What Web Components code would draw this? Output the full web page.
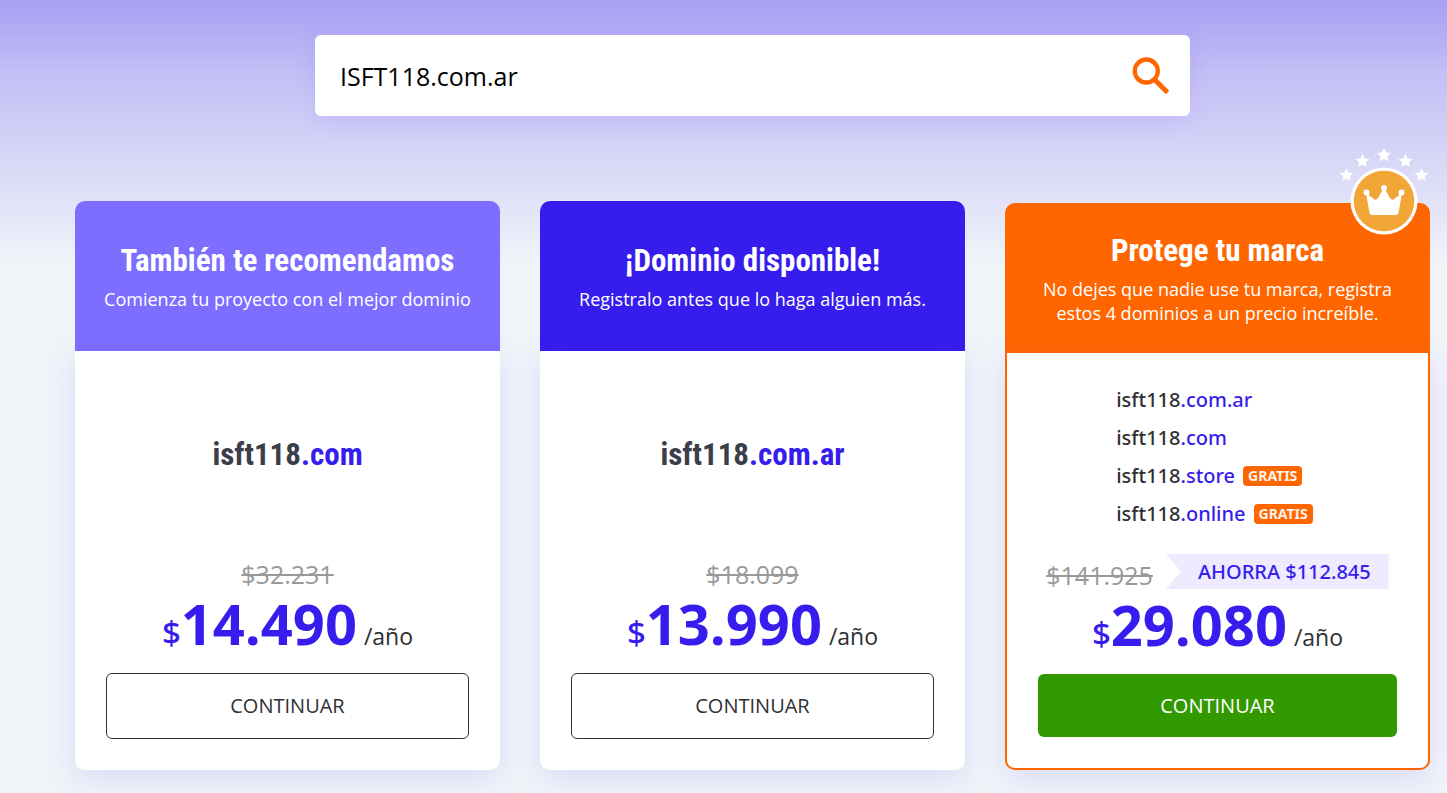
<!DOCTYPE html>
<html lang="es">
<head>
<meta charset="utf-8">
<meta name="viewport" content="width=device-width, initial-scale=1">
<title>Buscador de dominios</title>
<style>
body {
  margin: 0;
  min-height: 100vh;
  background: linear-gradient(#a79ff3 0, #c3bef5 72px, #f0f4f9 264px) no-repeat, #f0f4f9;
  font-family: "Open Sans", "Noto Sans", sans-serif;
  color: #2f3033;
}
.domains { margin-right: 6px; }
</style>
</head>
<body>
<domain-page>
  <domain-search slot="search" value="ISFT118.com.ar"></domain-search>
  <plan-card tone="violet">
    <span slot="title">También te recomendamos</span>
    <span slot="subtitle">Comienza tu proyecto con el mejor dominio</span>
    <domain-name slot="offer" size="large" name="isft118" tld=".com"></domain-name>
    <price-tag slot="price" old="$32.231" amount="14.490"></price-tag>
  </plan-card>
  <plan-card tone="blue">
    <span slot="title">¡Dominio disponible!</span>
    <span slot="subtitle">Registralo antes que lo haga alguien más.</span>
    <domain-name slot="offer" size="large" name="isft118" tld=".com.ar"></domain-name>
    <price-tag slot="price" old="$18.099" amount="13.990"></price-tag>
  </plan-card>
  <plan-card tone="orange" featured>
    <crown-badge slot="badge"></crown-badge>
    <span slot="title">Protege tu marca</span>
    <span slot="subtitle">No dejes que nadie use tu marca, registra estos 4 dominios a un precio increíble.</span>
    <div slot="offer" class="domains">
      <domain-name name="isft118" tld=".com.ar"></domain-name>
      <domain-name name="isft118" tld=".com"></domain-name>
      <domain-name name="isft118" tld=".store" tag="GRATIS"></domain-name>
      <domain-name name="isft118" tld=".online" tag="GRATIS"></domain-name>
    </div>
    <price-tag slot="price" old="$141.925" amount="29.080" saving="AHORRA $112.845"></price-tag>
  </plan-card>
</domain-page>

<script>
class DomainPage extends HTMLElement {
  connectedCallback() {
    this.attachShadow({ mode: 'open' }).innerHTML = `
      <style>
        :host { display: block; padding: 35px 17px 22px 75px; }
        .search { max-width: 875px; margin: 0 auto 85px; }
        .cards { display: grid; grid-template-columns: repeat(3, minmax(0, 1fr)); gap: 40px; }
        @media (max-width: 1100px) {
          :host { padding: 24px; }
          .cards { grid-template-columns: minmax(0, 1fr); }
        }
      </style>
      <main>
        <div class="search"><slot name="search"></slot></div>
        <div class="cards"><slot></slot></div>
      </main>`;
  }
}

class DomainSearch extends HTMLElement {
  connectedCallback() {
    this.attachShadow({ mode: 'open' }).innerHTML = `
      <style>
        :host { display: block; }
        form {
          display: flex; align-items: center; box-sizing: border-box; height: 81px;
          padding: 0 20px 0 25px; background: #fff; border-radius: 6px;
          box-shadow: 0 4px 24px rgba(54, 29, 237, .08);
        }
        input {
          flex: 1; min-width: 0; height: 60px; padding: 0; border: 0; outline: 0;
          background: none; color: #000; font: 400 25px/36px "Open Sans", "Noto Sans", sans-serif;
        }
        button { display: flex; padding: 0; border: 0; background: none; cursor: pointer; }
      </style>
      <form role="search" onsubmit="return false">
        <input type="text" aria-label="Buscar dominio">
        <button type="submit" aria-label="Buscar">
          <svg width="40" height="40" viewBox="0 0 40 40" fill="none" stroke="#ff6600">
            <circle cx="16.300" cy="15" r="11.500" stroke-width="4.300"/>
            <path d="M24.500 23.500 37.500 36.500" stroke-width="4.800"/>
          </svg>
        </button>
      </form>`;
    this.shadowRoot.querySelector('input').value = this.getAttribute('value') || '';
  }
}

class PlanCard extends HTMLElement {
  connectedCallback() {
    this.attachShadow({ mode: 'open' }).innerHTML = `
      <style>
        :host { display: flex; flex-direction: column; position: relative; --tone: #7d6eff; }
        :host([tone="blue"]) { --tone: #361ded; }
        :host([tone="orange"]) { --tone: #ff6600; }
        :host([featured]) { margin-top: 2px; }
        header {
          display: flex; flex-direction: column; align-items: center; justify-content: center;
          box-sizing: border-box; min-height: 150px; padding: 0 24px; gap: 6px;
          background: var(--tone); color: #fff; text-align: center; border-radius: 10px 10px 0 0;
        }
        h2 { margin: 0; font: 700 31px/40px "Roboto Condensed", Roboto, sans-serif; }
        p { margin: 0; font-size: 18px; line-height: 24px; }
        .body {
          flex: 1; display: flex; flex-direction: column; box-sizing: border-box;
          padding: 0 31px 31px; background: #fff; border-radius: 0 0 10px 10px;
          box-shadow: 0 8px 30px rgba(80, 50, 220, .13);
        }
        :host([featured]) .body { border: 2px solid var(--tone); border-top: 0; }
        .offer {
          flex: 1; display: flex; align-items: center; justify-content: center;
          box-sizing: border-box; min-height: 201px; padding-top: 6px;
        }
        button {
          height: 66px; margin-top: 15px; border: 1px solid #2f3033; border-radius: 6px;
          background: #fff; color: #2f3033; cursor: pointer;
          font: 400 20px/28px "Open Sans", "Noto Sans", sans-serif;
        }
        :host([featured]) button { height: 63px; border: 0; background: #339900; color: #fff; }
        .badge { position: absolute; top: -56px; right: -1px; }
      </style>
      <header>
        <h2><slot name="title"></slot></h2>
        <p><slot name="subtitle"></slot></p>
      </header>
      <div class="badge"><slot name="badge"></slot></div>
      <div class="body">
        <div class="offer"><slot name="offer"></slot></div>
        <slot name="price"></slot>
        <button type="button">CONTINUAR</button>
      </div>`;
  }
}

class DomainName extends HTMLElement {
  connectedCallback() {
    const tag = this.getAttribute('tag');
    this.attachShadow({ mode: 'open' }).innerHTML = `
      <style>
        :host { display: flex; align-items: center; font: 500 20px/38px "Noto Sans", sans-serif; }
        :host([size="large"]) { font: 700 31px/40px "Roboto Condensed", Roboto, sans-serif; color: #3b3d4a; }
        .tld { color: #361ded; }
        .tag {
          margin-left: 8px; padding: 0 5px; border-radius: 4px; background: #ff6600; color: #fff2ea;
          font-size: 14px; font-weight: 700; line-height: 20px;
        }
      </style>
      <span>${this.getAttribute('name')}<span class="tld">${this.getAttribute('tld')}</span></span>
      ${tag ? `<span class="tag">${tag}</span>` : ''}`;
  }
}

class PriceTag extends HTMLElement {
  connectedCallback() {
    const saving = this.getAttribute('saving');
    this.attachShadow({ mode: 'open' }).innerHTML = `
      <style>
        :host { display: block; }
        .before { display: flex; align-items: flex-end; justify-content: center; gap: 13px; height: 39px; }
        s { color: #999; font-size: 25px; line-height: 36px; }
        :host([saving]) s { text-decoration-thickness: 2px; }
        .saving {
          align-self: flex-start; padding: 0 18px 0 32px; background: #eeeaff; color: #361ded;
          white-space: nowrap; font: 500 20px/35px "Noto Sans", sans-serif;
          clip-path: polygon(0 0, 100% 0, 100% 100%, 0 100%, 15px 50%);
        }
        .now { display: flex; align-items: baseline; justify-content: center; height: 66px; line-height: 36px; }
        .sign { color: #361ded; font-family: "Noto Sans", sans-serif; font-size: 33px; font-weight: 500; }
        .amount { color: #361ded; font-size: 56px; font-weight: 700; line-height: 62px; }
        .period { margin-left: 7px; font-size: 23px; }
      </style>
      <div class="before">
        <s>${this.getAttribute('old')}</s>
        ${saving ? `<span class="saving">${saving}</span>` : ''}
      </div>
      <div class="now">
        <span class="sign">$</span><span class="amount">${this.getAttribute('amount')}</span><span class="period">/año</span>
      </div>`;
  }
}

class CrownBadge extends HTMLElement {
  connectedCallback() {
    this.attachShadow({ mode: 'open' }).innerHTML = `
      <style>:host, svg { display: block; }</style>
      <svg width="92" height="90" viewBox="0 0 92 90" fill="#fff" aria-hidden="true">
        <defs>
          <path id="star" d="M0-7 2.1-2.6 7-2.1 3.4 1.3 4.3 6 0 3.7-4.3 6-3.4 1.3-7-2.1-2.1-2.6Z"/>
        </defs>
        <use href="#star" x="7.500" y="28"/>
        <use href="#star" x="23.500" y="14"/>
        <use href="#star" x="45" y="8"/>
        <use href="#star" x="66.500" y="14"/>
        <use href="#star" x="82.500" y="28"/>
        <circle cx="45" cy="54" r="33.500"/>
        <circle cx="45" cy="54" r="30.300" fill="#f2a638"/>
        <circle cx="27.500" cy="45.500" r="3"/>
        <circle cx="45" cy="41" r="3"/>
        <circle cx="62.500" cy="45.500" r="3"/>
        <path d="M27 46 35.500 52.500Q37.500 53.500 39 51L44 42H46L51 51Q52.500 53.500 54.500 52.500L63 46 59.500 66Q59 68 57 68H33Q31 68 30.500 66Z"/>
      </svg>`;
  }
}

customElements.define('domain-page', DomainPage);
customElements.define('domain-search', DomainSearch);
customElements.define('crown-badge', CrownBadge);
customElements.define('domain-name', DomainName);
customElements.define('price-tag', PriceTag);
customElements.define('plan-card', PlanCard);
</script>
</body>
</html>
